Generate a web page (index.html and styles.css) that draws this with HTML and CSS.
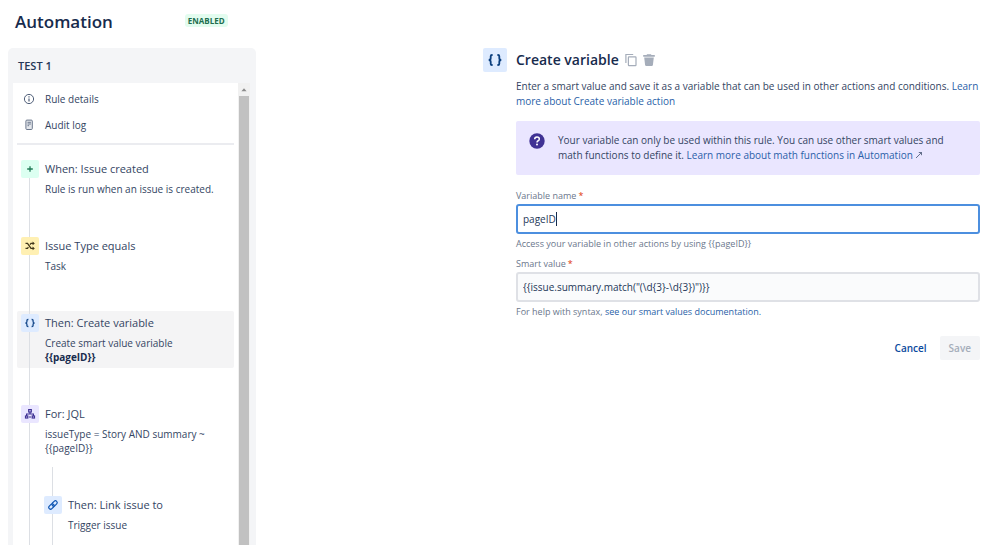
FILE: index.html
```
<!DOCTYPE html>
<html lang="en">
<head>
    <meta charset="UTF-8">
    <title>Automation</title>
    <link rel="stylesheet" href="styles.css">
</head>
<body>
<header class="page-header">
    <h1>Automation</h1>
    <span class="badge">ENABLED</span>
</header>
<div class="content">
    <aside class="sidebar">
        <h2 class="rule-name">TEST 1</h2>
        <div class="rule-panel">
            <div class="rule-list">
                <nav class="rule-menu">
                    <a href="#details">
                        <svg class="menu-icon" viewBox="0 0 12 12" fill="none" stroke="#505f79"><circle cx="6" cy="6" r="4.6"/><path d="M6 5.4v3M6 3.2v1.2" stroke-width="1.2"/></svg>
                        Rule details
                    </a>
                    <a href="#audit">
                        <svg class="menu-icon" viewBox="0 0 12 12" fill="none" stroke="#6b778c"><rect x="2.9" y="1.1" width="6.4" height="9.4" rx="1" fill="#e4e7ec"/><path d="M4.5 3.3h3.4M4.5 5h3.4M4.5 6.7h1.6"/></svg>
                        Audit log
                    </a>
                </nav>
                <div class="steps">
                    <div class="step">
                        <span class="step-icon green"><svg viewBox="0 0 12 12" fill="none" stroke="#1f7a56" stroke-width="1.3"><path d="M6 3.2v5.6M3.2 6h5.6"/></svg></span>
                        <h3>When: Issue created</h3>
                        <p>Rule is run when an issue is created.</p>
                    </div>
                    <div class="step">
                        <span class="step-icon yellow"><svg viewBox="0 0 12 12" fill="none" stroke="#42381c" stroke-width="1.3"><path d="M1.5 3.4h2L7 8.4h2.6M1.5 8.4h2l.9-1.2M6 4.7l1-1.3h2.6"/><path d="M8.6 1.6l2.2 1.8-2.2 1.8zM8.6 6.6l2.2 1.8-2.2 1.8z" fill="#42381c" stroke="none"/></svg></span>
                        <h3>Issue Type equals</h3>
                        <p>Task</p>
                    </div>
                    <div class="step active">
                        <span class="step-icon blue"><svg viewBox="0 0 12 12" fill="none" stroke="#174a8c" stroke-width="1.3"><path d="M4.4 2.5H4q-1.1 0-1.1 1.1v1.2Q2.9 6 1.4 6q1.5 0 1.5 1.2v1.2q0 1.1 1.1 1.1h.4M7.6 2.5H8q1.1 0 1.1 1.1v1.2Q9.1 6 10.6 6 9.1 6 9.1 7.2v1.2q0 1.1-1.1 1.1h-.4"/></svg></span>
                        <h3>Then: Create variable</h3>
                        <p>Create smart value variable<br><strong>{{pageID}}</strong></p>
                    </div>
                    <div class="step">
                        <span class="step-icon purple"><svg viewBox="0 0 12 12" fill="none" stroke="#403294" stroke-width="1.2"><rect x="4.7" y="1.6" width="2.6" height="2.4"/><path d="M6 4v2M2.6 8V6h6.8v2"/><rect x="1.5" y="8" width="2.3" height="2"/><rect x="8.2" y="8" width="2.3" height="2"/><path d="M5 9h2"/></svg></span>
                        <h3>For: JQL</h3>
                        <p>issueType = Story AND summary ~ {{pageID}}</p>
                    </div>
                    <div class="branch">
                        <div class="step">
                            <span class="step-icon blue"><svg viewBox="0 0 12 12" fill="none" stroke="#0f56b3" stroke-width="1.2"><g transform="rotate(-45 6 6)"><rect x=".8" y="4.2" width="6" height="3.6" rx="1.8"/><rect x="5.2" y="4.2" width="6" height="3.6" rx="1.8"/></g></svg></span>
                            <h3>Then: Link issue to</h3>
                            <p>Trigger issue</p>
                        </div>
                    </div>
                </div>
            </div>
            <div class="scrollbar">
                <svg class="scroll-arrow" viewBox="0 0 12 13"><path d="M3.4 8.2L6 5.2l2.6 3z" fill="#8b8b8b"/></svg>
                <div class="scroll-thumb"></div>
            </div>
        </div>
    </aside>
    <main class="editor">
        <span class="editor-icon"><svg viewBox="0 0 18 18" fill="none" stroke="#0b3f7e" stroke-width="1.8"><path d="M6.6 4H6Q4.7 4 4.7 5.3v2Q4.7 9 2.7 9q2 0 2 1.7v2Q4.7 14 6 14h.6M11.4 4h.6q1.3 0 1.3 1.3v2q0 1.7 2 1.7-2 0-2 1.7v2q0 1.3-1.3 1.3h-.6"/></svg></span>
        <div class="editor-body">
            <div class="editor-title">
                <h2>Create variable</h2>
                <button type="button" class="icon-button" aria-label="Copy"><svg viewBox="0 0 14 14" fill="none" stroke="#a5adba" stroke-width="1.2"><path d="M1.9 10V1.5h7.3"/><rect x="4.4" y="3.9" width="7.6" height="8.8" rx=".6"/></svg></button>
                <button type="button" class="icon-button" aria-label="Delete"><svg viewBox="0 0 14 14" fill="#a5adba"><path d="M1.2 2.1h3.6v-.9h4.4v.9h3.6v1.7H1.2zM2.2 4.6h9.6l-.9 7.3q-.1 1.1-1.2 1.1H4.3q-1.1 0-1.2-1.1z"/></svg></button>
            </div>
            <p class="description">Enter a smart value and save it as a variable that can be used in other actions and conditions. <a href="#learn">Learn more about Create variable action</a></p>
            <div class="notice">
                <svg class="notice-icon" viewBox="0 0 16 16"><circle cx="8" cy="8" r="7.7" fill="#403294"/><path d="M5.7 6.3Q5.7 4 8 4t2.3 2q0 1.2-1.2 1.8Q8 8.3 8 9.4" fill="none" stroke="#fff" stroke-width="1.5"/><circle cx="8" cy="11.6" r="1" fill="#fff"/></svg>
                <p>Your variable can only be used within this rule. You can use other smart values and math functions to define it. <a href="#math">Learn more about math functions in Automation <svg class="external" viewBox="0 0 8 8" fill="none" stroke="#42526e" stroke-width=".8"><path d="M1 7l5.5-5.5M3.8 1.5h2.7v2.7"/></svg></a></p>
            </div>
            <form>
                <div class="field">
                    <label for="name">Variable name<span class="required">*</span></label>
                    <div class="input-wrap">
                        <input type="text" id="name" class="focused" value="pageID">
                        <span class="caret"></span>
                    </div>
                    <p class="hint">Access your variable in other actions by using {{pageID}}</p>
                </div>
                <div class="field">
                    <label for="value">Smart value<span class="required">*</span></label>
                    <div class="input-wrap">
                        <input type="text" id="value" value='{{issue.summary.match("(\d{3}-\d{3})")}}'>
                    </div>
                    <p class="hint">For help with syntax, <a href="#docs">see our smart values documentation.</a></p>
                </div>
                <div class="actions">
                    <button type="button" class="cancel">Cancel</button>
                    <button type="submit" class="save" disabled>Save</button>
                </div>
            </form>
        </div>
    </main>
</div>
</body>
</html>
```
FILE: styles.css
```
* {
    box-sizing: border-box;
}
body {
    margin: 0;
    height: 100vh;
    overflow: hidden;
    display: flex;
    flex-direction: column;
    background: #fff;
    color: #344563;
    font: 10px/15px "Open Sans", "Noto Sans", sans-serif;
}
h1, h2, h3, p {
    margin: 0;
}
a {
    color: #2a5fa8;
    text-decoration: none;
}
svg {
    display: block;
}
.page-header {
    display: flex;
    align-items: flex-start;
    gap: 72px;
    padding: 10px 15px 14px;
}
.page-header h1 {
    font-size: 17px;
    line-height: 24px;
    font-weight: 600;
    color: #172b4d;
}
.badge {
    margin-top: 4px;
    padding: 0 3px;
    border-radius: 3px;
    background: #e3fcef;
    color: #216e4e;
    font-size: 8px;
    line-height: 13px;
    font-weight: 700;
}
.content {
    flex: 1;
    min-height: 0;
    display: flex;
    gap: 227px;
    padding: 0 19px 0 8px;
}

/* left column */
.sidebar {
    flex: none;
    width: 248px;
    display: flex;
    flex-direction: column;
    padding: 0 6px 0 5px;
    border-radius: 5px 5px 0 0;
    background: #f4f5f7;
}
.rule-name {
    padding: 10px 5px;
    font-size: 11px;
    line-height: 15px;
    font-weight: 600;
    color: #253858;
}
.rule-panel {
    flex: 1;
    min-height: 0;
    display: flex;
}
.rule-list {
    flex: 1;
    overflow: hidden;
    padding: 3px 4px 0;
    background: #fff;
}
.rule-menu {
    padding-bottom: 5px;
    border-bottom: 2px solid #ebecf0;
}
.rule-menu a {
    display: flex;
    align-items: center;
    gap: 10px;
    height: 26px;
    padding-left: 6px;
    color: #344563;
}
.menu-icon {
    width: 12px;
    height: 12px;
}
.steps {
    position: relative;
    display: flex;
    flex-direction: column;
    gap: 34px;
    padding: 12px 0 40px;
}
/* vertical connector behind the icons */
.steps::before, .branch::before {
    content: "";
    position: absolute;
    top: 16px;
    bottom: 0;
    left: 12px;
    width: 1px;
    background: #dcdfe4;
    z-index: 1;
}
.step {
    display: grid;
    grid-template-columns: 18px 1fr;
    column-gap: 6px;
    row-gap: 4px;
    padding: 3px 4px 4px;
    border-radius: 2px;
}
.step.active {
    background: #f4f4f5;
}
.step h3 {
    font-size: 11px;
    line-height: 17px;
    font-weight: 400;
}
.step p {
    grid-column: 2;
    line-height: 14px;
}
.step strong {
    color: #172b4d;
}
.step-icon {
    position: relative;
    z-index: 2;
    display: flex;
    align-items: center;
    justify-content: center;
    width: 18px;
    height: 18px;
    border-radius: 2px;
}
.step-icon svg {
    width: 12px;
    height: 12px;
}
.green {
    background: #dcfff1;
}
.yellow {
    background: #fff0b3;
}
.blue {
    background: #deebff;
}
.purple {
    background: #eae6ff;
}
.branch {
    position: relative;
    margin-left: 23px;
}
.branch::before {
    top: -26px;
    bottom: -40px;
}
.scrollbar {
    width: 12px;
    display: flex;
    flex-direction: column;
    background: #f1f1f1;
}
.scroll-arrow {
    height: 13px;
}
.scroll-thumb {
    flex: 1;
    margin: 0 1px;
    background: #c1c1c1;
}

/* right column */
.editor {
    flex: 1;
    display: flex;
    align-items: flex-start;
    gap: 9px;
}
.editor-icon {
    flex: none;
    padding: 3px;
    border-radius: 2px;
    background: #deebff;
}
.editor-icon svg {
    width: 18px;
    height: 18px;
}
.editor-body {
    flex: 1;
}
.editor-title {
    display: flex;
    align-items: center;
    gap: 4px;
    height: 24px;
}
.editor-title h2 {
    margin-right: 1px;
    font-size: 14px;
    line-height: 24px;
    font-weight: 600;
    color: #172b4d;
}
button {
    border: 0;
    background: none;
    font: inherit;
}
.icon-button {
    padding: 0;
}
.icon-button svg {
    width: 14px;
    height: 14px;
}
.description {
    margin-top: 7px;
}
.notice {
    display: flex;
    gap: 13px;
    margin-top: 12px;
    padding: 12px 16px 12px 13px;
    border-radius: 2px;
    background: #eae6ff;
}
.notice-icon {
    flex: none;
    width: 16px;
    height: 16px;
}
.external {
    display: inline-block;
    width: 8px;
    height: 8px;
}
form {
    margin-top: 15px;
}
.field {
    margin-bottom: 7px;
}
.field label {
    display: block;
    font-size: 9px;
    line-height: 12px;
    font-weight: 500;
    color: #6b778c;
}
.required {
    padding-left: 2px;
    color: #de350b;
}
.input-wrap {
    position: relative;
    margin: 2px 0 3px;
}
.input-wrap input {
    display: block;
    width: 100%;
    height: 30px;
    padding: 0 5px;
    border: 2px solid #dfe1e6;
    border-radius: 3px;
    outline: 0;
    background: #fafbfc;
    color: #253858;
    font: inherit;
}
.input-wrap .focused {
    border-color: #4c8fdf;
    background: #fff;
    caret-color: transparent;
}
.caret {
    position: absolute;
    top: 8px;
    left: 40px;
    width: 1px;
    height: 14px;
    background: #172b4d;
}
.hint {
    font-size: 9px;
    line-height: 14px;
    color: #6b778c;
}
.actions {
    display: flex;
    justify-content: flex-end;
    gap: 4px;
    margin-top: 17px;
}
.actions button {
    height: 24px;
    padding: 0 9px;
    border-radius: 2px;
    font-weight: 600;
}
.cancel {
    color: #0b4a9e;
}
.save {
    background: #f4f5f7;
    color: #a5adba;
}
```
